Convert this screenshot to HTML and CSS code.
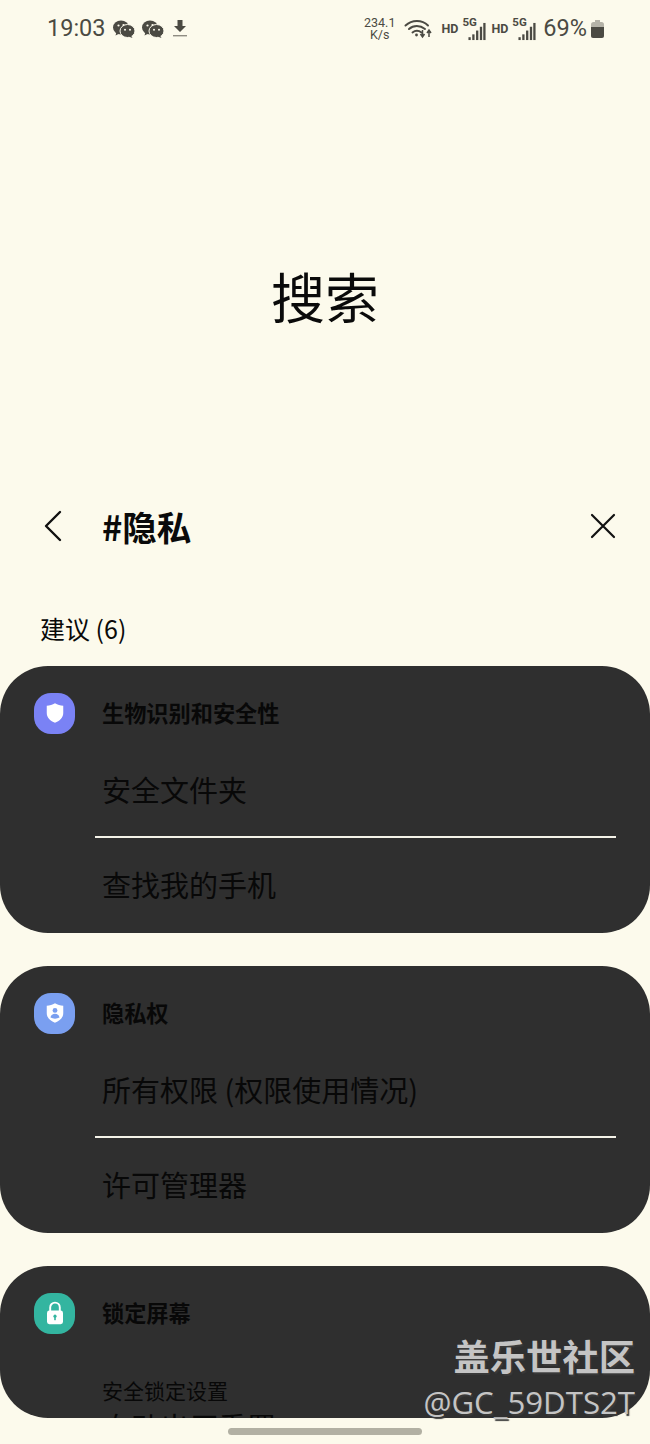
FILE: index.html
```html
<!DOCTYPE html>
<html lang="zh-CN">
<head>
<meta charset="utf-8">
<title>搜索</title>
<link rel="stylesheet" href="styles.css">
</head>
<body>
<div class="screen">
  <header class="status">
    <div class="status-left">
      <span class="clock">19:03</span>
      <svg class="ic-chat" viewBox="0 0 22 18"><ellipse cx="8" cy="7.500" rx="8" ry="7"/><path d="M3.500 12l-1 3.500 4-2z"/><ellipse cx="14.500" cy="11" rx="7.500" ry="6.500" stroke="#fcfaec" stroke-width="1"/><path d="M18 15.500l1.500 2.500-4-1.500z"/><circle cx="5.500" cy="5.500" r="1.100" fill="#fcfaec"/><circle cx="10.500" cy="5" r="1.100" fill="#fcfaec"/><circle cx="12" cy="9.800" r="1" fill="#fcfaec"/><circle cx="17" cy="9.800" r="1" fill="#fcfaec"/></svg>
      <svg class="ic-chat" viewBox="0 0 22 18"><ellipse cx="8" cy="7.500" rx="8" ry="7"/><path d="M3.500 12l-1 3.500 4-2z"/><ellipse cx="14.500" cy="11" rx="7.500" ry="6.500" stroke="#fcfaec" stroke-width="1"/><path d="M18 15.500l1.500 2.500-4-1.500z"/><circle cx="5.500" cy="5.500" r="1.100" fill="#fcfaec"/><circle cx="10.500" cy="5" r="1.100" fill="#fcfaec"/><circle cx="12" cy="9.800" r="1" fill="#fcfaec"/><circle cx="17" cy="9.800" r="1" fill="#fcfaec"/></svg>
      <svg class="ic-download" viewBox="0 0 14 17"><path d="M4.500 0h5v6h3.500l-6 6-6-6h3.500z"/><rect y="15" width="14" height="1.400" fill="#8f8c82"/></svg>
    </div>
    <div class="status-right">
      <span class="speed">234.1<br>K/s</span>
      <svg class="ic-wifi" viewBox="0 0 28 20"><path d="M1.500 6.500C8 .5 18 .5 24 6.500M5 10c4.500-4 11-4 16 0M8.500 13.500c2.800-2.200 6-2.200 9 0" fill="none" stroke="#4b4a43" stroke-width="2" stroke-linecap="round"/><circle cx="12.500" cy="16" r="1.400" fill="#4b4a43"/><path d="M18.500 11v6M16.500 15l2 3 2-3M25 18v-6M23 14l2-3 2 3" fill="none" stroke="#4b4a43" stroke-width="1.500"/></svg>
      <span class="hd">HD</span>
      <span class="signal">
        <span class="five-g">5G</span>
        <svg class="ic-bars" viewBox="0 0 18 20"><rect x="0" y="16" width="2.400" height="3"/><rect x="4" y="13" width="2.400" height="6"/><rect x="8" y="9" width="2.400" height="10"/><rect x="12" y="5" width="2.400" height="14"/><rect x="15.600" y="1" width="2.400" height="18"/></svg>
      </span>
      <span class="hd hd-second">HD</span>
      <span class="signal">
        <span class="five-g">5G</span>
        <svg class="ic-bars" viewBox="0 0 18 20"><rect x="0" y="16" width="2.400" height="3"/><rect x="4" y="13" width="2.400" height="6"/><rect x="8" y="9" width="2.400" height="10"/><rect x="12" y="5" width="2.400" height="14"/><rect x="15.600" y="1" width="2.400" height="18"/></svg>
      </span>
      <span class="battery-pct">69%</span>
      <svg class="ic-battery" viewBox="0 0 13 18"><path d="M4 0h5v2H4z" fill="#b5b3a8"/><rect y="2" width="13" height="16" rx="2.500" fill="#b5b3a8"/><path d="M0 7h13v8.500a2.500 2.500 0 0 1-2.500 2.500h-8A2.500 2.500 0 0 1 0 15.500z" fill="#4b4a43"/></svg>
    </div>
  </header>

  <h1 class="page-title">搜索</h1>

  <div class="search-row">
    <svg class="ic-back" viewBox="0 0 20 32"><path d="M17 2L3 16l14 14" fill="none" stroke="#111" stroke-width="2.400" stroke-linecap="round" stroke-linejoin="round"/></svg>
    <span class="query">#隐私</span>
    <svg class="ic-close" viewBox="0 0 26 26"><path d="M2 2l22 22M24 2L2 24" fill="none" stroke="#111" stroke-width="2.200" stroke-linecap="round"/></svg>
  </div>

  <p class="results-label">建议 (6)</p>

  <main class="results">
    <section class="card">
      <div class="card-head">
        <span class="app-icon app-icon-violet">
          <svg viewBox="0 0 24 28"><path d="M12 1c3.500 2 7 3 11 3.300V14c0 6.500-5 10.800-11 13C6 24.800 1 20.500 1 14V4.300C5 4 8.500 3 12 1z" fill="#fff"/></svg>
        </span>
        <span class="card-title">生物识别和安全性</span>
      </div>
      <div class="row row-first">安全文件夹</div>
      <div class="divider"></div>
      <div class="row row-last">查找我的手机</div>
    </section>

    <section class="card">
      <div class="card-head">
        <span class="app-icon app-icon-blue">
          <svg viewBox="0 0 24 28"><path d="M12 1c3.500 2 7 3 11 3.300V14c0 6.500-5 10.800-11 13C6 24.800 1 20.500 1 14V4.300C5 4 8.500 3 12 1z" fill="#fff"/><circle cx="12" cy="10.500" r="3.200" fill="#7a9ff0"/><path d="M6 20c.5-3.500 3-5 6-5s5.500 1.500 6 5c-3.500 2-8.500 2-12 0z" fill="#7a9ff0"/></svg>
        </span>
        <span class="card-title">隐私权</span>
      </div>
      <div class="row row-first">所有权限 (权限使用情况)</div>
      <div class="divider"></div>
      <div class="row row-last">许可管理器</div>
    </section>

    <section class="card">
      <div class="card-head">
        <span class="app-icon app-icon-teal">
          <svg viewBox="0 0 22 30"><path d="M5 13V8a6 6 0 0 1 12 0v5" fill="none" stroke="#fff" stroke-width="2.400"/><rect x="1" y="12" width="20" height="17" rx="3" fill="#fff"/><circle cx="11" cy="19" r="2" fill="#33b5a0"/><rect x="10" y="19" width="2" height="5" fill="#33b5a0"/></svg>
        </span>
        <span class="card-title">锁定屏幕</span>
      </div>
      <div class="row-small">安全锁定设置</div>
      <div class="row-clipped">自动出厂重置</div>
    </section>
  </main>

  <div class="watermark">
    <div class="wm-top">盖乐世社区</div>
    <div class="wm-bottom">@GC_59DTS2T</div>
  </div>

  <div class="nav-pill"></div>
</div>
</body>
</html>
```

FILE: styles.css
```css
* { box-sizing: border-box; }

html, body {
  margin: 0;
  padding: 0;
  background: #fcfaec;
}

.screen {
  position: relative;
  width: 650px;
  height: 1444px;
  overflow: hidden;
  background: #fcfaec;
  color: #0a0a0a;
  font-family: "Noto Sans CJK SC", "Roboto", "Noto Sans", sans-serif;
}

/* Status bar */
.status {
  height: 57px;
  padding: 0 46px 0 47px;
  display: flex;
  align-items: center;
  justify-content: space-between;
  color: #4b4a43;
}

.status-left, .status-right {
  display: flex;
  align-items: center;
}

.clock {
  font: 400 23.500px/1 Roboto, sans-serif;
}

.ic-chat {
  width: 22px;
  height: 18px;
  fill: #4b4a43;
  margin-left: 7px;
}

.ic-download {
  width: 14px;
  height: 17px;
  fill: #4b4a43;
  margin-left: 9px;
}

.speed {
  font: 400 12.500px/12px Roboto, sans-serif;
  text-align: center;
  margin-right: 9px;
}

.ic-wifi {
  width: 28px;
  height: 20px;
  margin-right: 9px;
}

.hd {
  font: 700 12.500px/1 Roboto, sans-serif;
  margin-top: 2px;
}
.hd-second { margin-left: 5px; }

.signal {
  position: relative;
  display: block;
  width: 24px;
  height: 24px;
  margin-left: 4px;
}

.five-g {
  position: absolute;
  left: 0;
  top: 0;
  font: 700 11.500px/1 Roboto, sans-serif;
}

.ic-bars {
  position: absolute;
  right: 0;
  bottom: 0;
  width: 18px;
  height: 19px;
  fill: #4b4a43;
}

.battery-pct {
  font: 400 23.500px/1 Roboto, sans-serif;
  margin-left: 7px;
}

.ic-battery {
  width: 13px;
  height: 18px;
  margin-left: 4px;
}

/* Heading and search field */
.page-title {
  margin: 203px 0 0;
  height: 72px;
  font-size: 54px;
  line-height: 72px;
  font-weight: 400;
  text-align: center;
}

.search-row {
  margin-top: 176px;
  height: 36px;
  padding: 0 34px 0 43px;
  display: flex;
  align-items: center;
}

.ic-back { width: 20px; height: 32px; }

.ic-close { width: 26px; height: 26px; }

.query {
  flex: 1;
  margin-left: 39px;
  font-size: 34.500px;
  line-height: 36px;
  font-weight: 700;
}

.results-label {
  margin: 69px 0 0 40px;
  height: 30px;
  font-size: 25px;
  line-height: 30px;
}

/* Results list, cut off above the navigation area */
.results {
  margin-top: 23px;
  height: 752px;
  overflow: hidden;
  border-radius: 0 0 48px 48px;
  display: flex;
  flex-direction: column;
  gap: 33.500px;
}

.card {
  flex: none;
  height: 266.500px;
  background: #2f2f2f;
  border-radius: 48px;
  padding-top: 26px;
}

.card:last-child { height: 180px; }

.card-head {
  height: 42px;
  padding-left: 34px;
  display: flex;
  align-items: center;
}

.app-icon {
  width: 41px;
  height: 41px;
  border-radius: 17px;
  display: flex;
  align-items: center;
  justify-content: center;
}
.app-icon svg { width: 18px; height: 24px; }
.app-icon-violet { background: #7a82f5; }
.app-icon-blue { background: #7a9ff0; }
.app-icon-teal { background: #33b5a0; }

.card-title {
  margin: -3px 0 0 27px;
  font-size: 22.200px;
  line-height: 42px;
  font-weight: 700;
  color: #080808;
}

.row {
  padding-left: 102px;
  font-size: 29px;
  line-height: 40px;
  color: #080808;
}
.row-first { height: 102px; padding-top: 35px; }
.row-last { height: 94px; padding-top: 26px; }

.divider {
  height: 2px;
  margin: 0 34px 0 95px;
  background: #f4f2e8;
}

.row-small {
  margin-top: 40px;
  padding-left: 102px;
  font-size: 21px;
  line-height: 32px;
  color: #080808;
}

.row-clipped {
  padding-left: 102px;
  font-size: 29px;
  line-height: 40px;
  color: #080808;
}

/* Community watermark laid over the list */
.watermark {
  position: absolute;
  right: 15px;
  top: 1329px;
  text-align: right;
  color: #c4c4c4;
  text-shadow: 1.500px 1.500px 1px #3a3a3a;
  white-space: nowrap;
}

.wm-top {
  font-size: 36.300px;
  line-height: 52px;
  font-weight: 700;
}

.wm-bottom {
  font: 400 31.200px/40px "Open Sans", sans-serif;
  margin-top: 1px;
}

.nav-pill {
  position: absolute;
  left: 228px;
  top: 1428px;
  width: 194px;
  height: 7px;
  border-radius: 4px;
  background: #b2b0a3;
}
```
